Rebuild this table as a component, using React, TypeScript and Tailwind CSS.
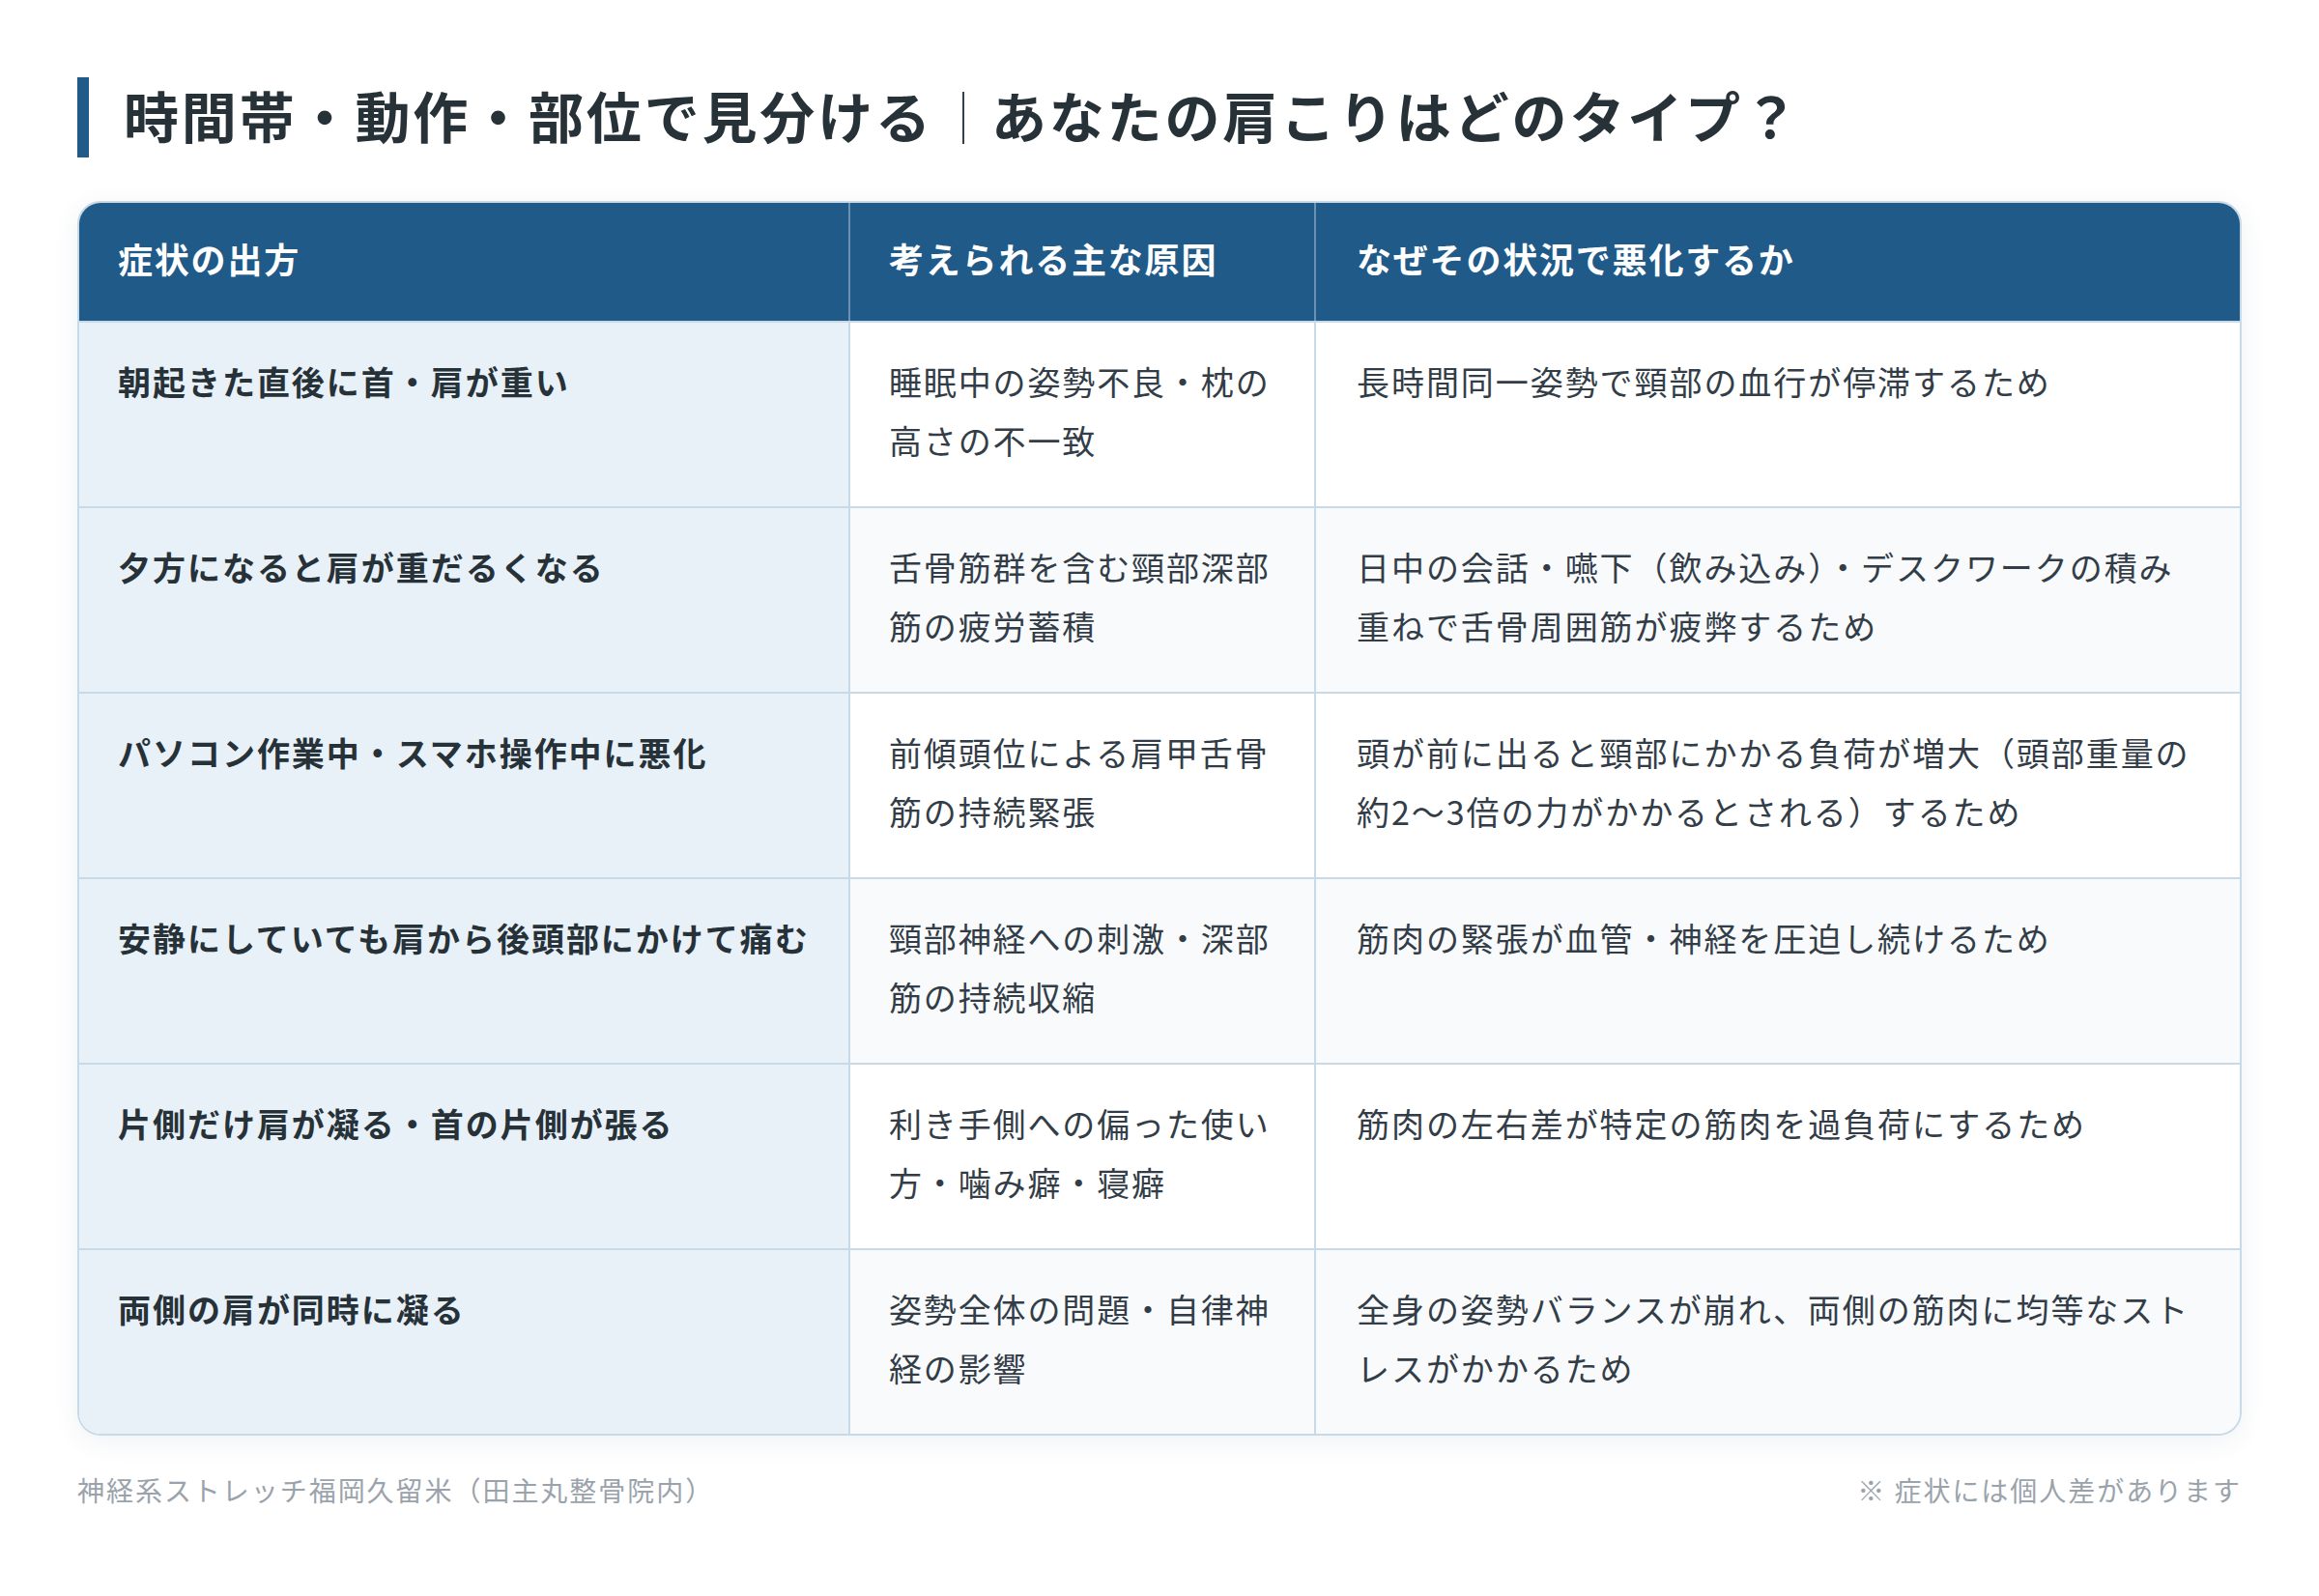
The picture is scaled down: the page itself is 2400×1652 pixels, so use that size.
import React from "react";

const rows: { s: string; c: string[]; r: string[] }[] = [
  {
    s: "朝起きた直後に首・肩が重い",
    c: ["睡眠中の姿勢不良・枕の", "高さの不一致"],
    r: ["長時間同一姿勢で頸部の血行が停滞するため"],
  },
  {
    s: "夕方になると肩が重だるくなる",
    c: ["舌骨筋群を含む頸部深部", "筋の疲労蓄積"],
    r: ["日中の会話・嚥下（飲み込み）・デスクワークの積み", "重ねで舌骨周囲筋が疲弊するため"],
  },
  {
    s: "パソコン作業中・スマホ操作中に悪化",
    c: ["前傾頭位による肩甲舌骨", "筋の持続緊張"],
    r: ["頭が前に出ると頸部にかかる負荷が増大（頭部重量の", "約2〜3倍の力がかかるとされる）するため"],
  },
  {
    s: "安静にしていても肩から後頭部にかけて痛む",
    c: ["頸部神経への刺激・深部", "筋の持続収縮"],
    r: ["筋肉の緊張が血管・神経を圧迫し続けるため"],
  },
  {
    s: "片側だけ肩が凝る・首の片側が張る",
    c: ["利き手側への偏った使い", "方・噛み癖・寝癖"],
    r: ["筋肉の左右差が特定の筋肉を過負荷にするため"],
  },
  {
    s: "両側の肩が同時に凝る",
    c: ["姿勢全体の問題・自律神", "経の影響"],
    r: ["全身の姿勢バランスが崩れ、両側の筋肉に均等なスト", "レスがかかるため"],
  },
];

function Lines({ lines }: { lines: string[] }) {
  return (
    <>
      {lines.map((l, i) => (
        <span key={i} className="block whitespace-nowrap">
          {l}
        </span>
      ))}
    </>
  );
}

export default function App() {
  return (
    <div
      className="min-h-[1652px] w-[2400px] bg-white px-[80px] pt-[80px]"
      style={{ fontFamily: '"Noto Sans CJK JP", "Noto Sans", sans-serif' }}
    >
      <h1 className="flex h-[83px] items-center border-l-[12px] border-[#1f5a88] pb-[6px] pl-[36px] text-[57px] font-bold leading-[77px] tracking-[0.05em] text-[#263238]">
        <span>時間帯・動作・部位で見分ける</span>
        <span className="ml-[30px] mr-[28px] mt-[6px] inline-block h-[54px] w-[2px] bg-[#34414c]" />
        <span>あなたの肩こりはどのタイプ？</span>
      </h1>

      <div className="mt-[45px] overflow-hidden rounded-[24px] border-2 border-[#c8d9e8] shadow-[0_6px_28px_rgba(30,60,90,0.07)]">
        <div className="grid grid-cols-[796px_482px_1fr] border-b-2 border-[#c8d9e8] bg-[#1f5a88] text-[36px] font-bold leading-[66px] tracking-[0.05em] text-white">
          <div className="px-[40px] pb-[32px] pt-[24px]">症状の出方</div>
          <div className="border-l-2 border-[#6b91b4] px-[40px] pb-[32px] pt-[24px]">考えられる主な原因</div>
          <div className="border-l-2 border-[#6b91b4] px-[42px] pb-[32px] pt-[24px]">なぜその状況で悪化するか</div>
        </div>
        {rows.map((row, i) => (
          <div
            key={i}
            className={
              "grid grid-cols-[796px_482px_1fr] text-[34px] leading-[61px] " +
              (i > 0 ? "border-t-2 border-[#c8d9e8] " : "") +
              (i % 2 === 1 ? "bg-[#f8fafc]" : "bg-white")
            }
          >
            <div className="whitespace-nowrap bg-[#e8f0f8] pb-[38px] pl-[40px] pr-[20px] pt-[30px] font-bold tracking-[0.058em] text-[#263238]">
              {row.s}
            </div>
            <div className="border-l-2 border-[#c8d9e8] px-[40px] pb-[38px] pt-[30px] tracking-[0.055em] text-[#333d47]">
              <Lines lines={row.c} />
            </div>
            <div className="border-l-2 border-[#c8d9e8] px-[42px] pb-[38px] pt-[30px] tracking-[0.057em] text-[#333d47]">
              <Lines lines={row.r} />
            </div>
          </div>
        ))}
      </div>

      <div className="mt-[34px] flex justify-between text-[28px] leading-[44px] tracking-[0.07em] text-[#9aa3ab]">
        <span>神経系ストレッチ福岡久留米（田主丸整骨院内）</span>
        <span>※ 症状には個人差があります</span>
      </div>
    </div>
  );
}
